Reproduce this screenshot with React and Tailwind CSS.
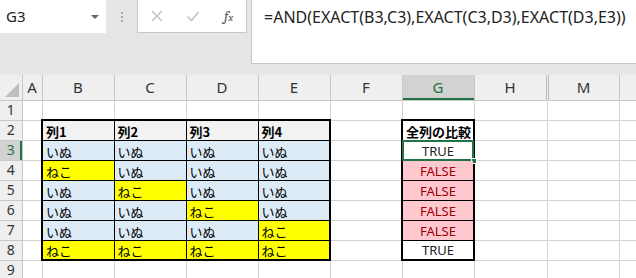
const jp = { fontFamily: '"Noto Sans CJK JP", "Noto Sans", sans-serif' };

const CAT = "ねこ";
const DOG = "いぬ";

// rows 3..8 of the B:E table
const rows = [
  [DOG, DOG, DOG, DOG],
  [CAT, DOG, DOG, DOG],
  [DOG, CAT, DOG, DOG],
  [DOG, DOG, CAT, DOG],
  [DOG, DOG, DOG, CAT],
  [CAT, CAT, CAT, CAT],
];

const results = [true, false, false, false, false, true];

const cols = ["A", "B", "C", "D", "E", "F", "G", "H", "M", ""];

const grid = "border border-[#d4d4d4]";

function RowHead({ n, active }) {
  return (
    <td
      className={`border-b border-r border-[#c8c8c8] text-center align-middle text-[14px] leading-none ${
        active ? "bg-[#d2d2d2] text-[#217346] shadow-[inset_-2px_0_0_#217346]" : "bg-[#efefef] text-[#333]"
      }`}
    >
      {n}
    </td>
  );
}

function TopBar() {
  return (
    <div className="flex h-[64px] items-start bg-[#e6e6e6]">
      <div className="flex h-[33px] w-[106px] items-center justify-between bg-white pl-[6px] pr-[7px] text-[15px] text-[#222]">
        <span>G3</span>
        <span className="h-0 w-0 border-x-[4px] border-t-[4px] border-x-transparent border-t-[#666]" />
      </div>
      <div className="flex h-[33px] w-[31px] flex-col items-center justify-center gap-[2px]">
        <span className="h-[2px] w-[2px] bg-[#aaa]" />
        <span className="h-[2px] w-[2px] bg-[#aaa]" />
        <span className="h-[2px] w-[2px] bg-[#aaa]" />
      </div>
      <div className="flex h-[33px] w-[110px] items-center border border-t-0 border-[#c6c6c6] bg-white pl-[12px]">
        <svg width="14" height="14" viewBox="0 0 14 14" className="mr-[22px]">
          <path d="M2 2 L12 12 M12 2 L2 12" stroke="#c4c4c4" strokeWidth="1.6" />
        </svg>
        <svg width="14" height="14" viewBox="0 0 14 14" className="mr-[24px]">
          <path d="M1.5 7.5 L5.5 11.5 L12.5 3" stroke="#c4c4c4" strokeWidth="1.6" fill="none" />
        </svg>
        <span className="font-serif text-[15px] italic text-[#555]">
          f<span className="text-[11px]">x</span>
        </span>
      </div>
      <div className="ml-[4px] flex h-[64px] flex-1 items-start border-b border-l border-[#c6c6c6] bg-white pl-[12px] pt-[5px] text-[16px] text-[#222]">
        =AND(EXACT(B3,C3),EXACT(C3,D3),EXACT(D3,E3))
      </div>
    </div>
  );
}

export default function App() {
  return (
    <div className="h-[278px] w-[636px] overflow-hidden bg-[#e6e6e6]" style={{ fontFamily: '"Noto Sans", sans-serif' }}>
      <TopBar />
      <div className="h-[11px]" />
      <table className="w-[636px] table-fixed border-collapse whitespace-nowrap bg-white">
        <colgroup>
          <col className="w-[22px]" />
          <col className="w-[20px]" />
          <col className="w-[72px]" />
          <col className="w-[72px]" />
          <col className="w-[72px]" />
          <col className="w-[72px]" />
          <col className="w-[72px]" />
          <col className="w-[72px]" />
          <col className="w-[73px]" />
          <col className="w-[72px]" />
          <col className="w-[17px]" />
        </colgroup>
        <tbody>
          <tr className="h-[25px]">
            <td className="relative border-b border-r border-[#c8c8c8] bg-[#efefef]">
              <span className="absolute bottom-[3px] right-[3px] h-0 w-0 border-b-[14px] border-l-[14px] border-b-[#bfbfbf] border-l-transparent" />
            </td>
            {cols.map((c, i) => (
              <td
                key={i}
                className={`border-b border-r border-[#c8c8c8] text-center align-middle text-[15px] leading-none ${
                  c === "G"
                    ? "bg-[#d2d2d2] text-[#217346] shadow-[inset_0_-2px_0_#217346]"
                    : "bg-[#efefef] text-[#333]"
                } ${c === "H" ? "border-r-[3px] border-r-[#bbb] border-double" : ""}`}
              >
                {c}
              </td>
            ))}
          </tr>
          <tr className="h-[20px]">
            <RowHead n={1} />
            {cols.map((c, i) => (
              <td key={i} className={grid} />
            ))}
          </tr>
          <tr className="h-[20px]">
            <RowHead n={2} />
            <td className={grid} />
            {["列1", "列2", "列3", "列4"].map((h, i) => (
              <td
                key={h}
                className={`border border-black bg-[#f2f2f2] px-[3px] pt-[2px] text-[13px] font-bold leading-none text-black ${
                  i === 0 ? "border-l-2" : ""
                } ${i === 3 ? "border-r-2" : ""} border-t-2`}
                style={jp}
              >
                {h}
              </td>
            ))}
            <td className={grid} />
            <td className="overflow-hidden border-2 border-b border-black px-[3px] pt-[2px] text-[13px] font-bold leading-none text-black" style={jp}>
              全列の比較
            </td>
            <td className={grid} />
            <td className={grid} />
            <td className={grid} />
          </tr>
          {rows.map((r, ri) => {
            const last = ri === rows.length - 1;
            const ok = results[ri];
            return (
              <tr key={ri} className="h-[20px]">
                <RowHead n={ri + 3} active={ri === 0} />
                <td className={grid} />
                {r.map((v, ci) => (
                  <td
                    key={ci}
                    className={`border border-black px-[3px] pt-[2px] text-[13px] leading-none text-black ${
                      v === CAT ? "bg-[#ffff00]" : "bg-[#ddebf7]"
                    } ${ci === 0 ? "border-l-2" : ""} ${ci === 3 ? "border-r-2" : ""} ${last ? "border-b-2" : ""}`}
                    style={jp}
                  >
                    {v}
                  </td>
                ))}
                <td className={grid} />
                <td
                  className={`relative border border-x-2 border-black pt-[2px] text-center text-[13px] leading-none ${
                    ok ? "bg-white text-[#222]" : "bg-[#ffc7ce] text-[#9c0006]"
                  } ${last ? "border-b-2" : ""}`}
                >
                  {ok ? "TRUE" : "FALSE"}
                  {ri === 0 && (
                    <>
                      <span className="absolute -inset-[1px] border-2 border-[#217346]" />
                      <span className="absolute -bottom-[4px] -right-[4px] h-[6px] w-[6px] border border-white bg-[#217346]" />
                    </>
                  )}
                </td>
                <td className={grid} />
                <td className={grid} />
                <td className={grid} />
              </tr>
            );
          })}
          <tr className="h-[20px]">
            <RowHead n={9} />
            {cols.map((c, i) => (
              <td key={i} className={grid} />
            ))}
          </tr>
        </tbody>
      </table>
    </div>
  );
}
